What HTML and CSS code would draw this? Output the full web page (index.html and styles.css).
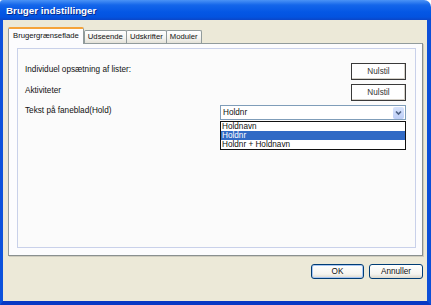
FILE: index.html
```html
<!DOCTYPE html>
<html lang="da">
<head>
  <meta charset="UTF-8">
  <title>Bruger indstillinger</title>
  <link rel="stylesheet" href="styles.css">
</head>
<body>
  <div class="window">
    <div class="titlebar">Bruger indstillinger</div>
    <div class="client">
      <div class="tabs">
        <div class="tab active">Brugergrænseflade</div>
        <div class="tab">Udseende</div>
        <div class="tab">Udskrifter</div>
        <div class="tab">Moduler</div>
      </div>
      <div class="tabpanel">
        <div class="page">
          <div class="row">
            <span class="label">Individuel opsætning af lister:</span>
            <button class="reset">Nulstil</button>
          </div>
          <div class="row">
            <span class="label">Aktiviteter</span>
            <button class="reset">Nulstil</button>
          </div>
          <div class="row">
            <span class="label">Tekst på faneblad(Hold)</span>
            <div class="combo">
              <div class="combo-value">Holdnr</div>
              <div class="combo-arrow">
                <svg width="11" height="12" viewBox="0 0 11 12">
                  <path d="M3 4.5 L5.5 7 L8 4.5" fill="none" stroke="#4d6185" stroke-width="1.7"/>
                </svg>
              </div>
              <ul class="combo-list">
                <li>Holdnavn</li>
                <li class="selected">Holdnr</li>
                <li>Holdnr + Holdnavn</li>
              </ul>
            </div>
          </div>
        </div>
      </div>
      <div class="actions">
        <button class="btn default">OK</button>
        <button class="btn">Annuller</button>
      </div>
    </div>
  </div>
</body>
</html>
```

FILE: styles.css
```css
body {
  margin: 0;
  background: #ffffff;
  font-family: "Liberation Sans", Arial, sans-serif;
  font-size: 8.2px;
  color: #111;
}
.window {
  width: 431px;
  height: 305px;
  display: flex;
  flex-direction: column;
}
.titlebar {
  height: 20px;
  box-sizing: border-box;
  padding-left: 6px;
  line-height: 21px;
  color: white;
  font-weight: bold;
  font-size: 9.8px;
  text-shadow: 1px 1px 0 #0a2d8c;
  background: linear-gradient(#4b93f6, #1466ea 25%, #0457e5 60%, #0353e0 85%, #0a46c8);
  border-top-left-radius: 3px;
  border-top-right-radius: 7px;
}
.client {
  flex: 1;
  display: flex;
  flex-direction: column;
  background: #ece9d8;
  border-left: 3px solid #0c52dc;
  border-right: 4px solid #0c4fd8;
  border-bottom: 4px solid #0838c4;
  padding: 7px 4px 0 5px;
}
.tabs {
  display: flex;
  align-items: flex-end;
  height: 17px;
  margin-bottom: -1px;
  position: relative;
  z-index: 1;
  font-size: 7.7px;
}
.tab {
  height: 13px;
  box-sizing: border-box;
  margin-bottom: 1px;
  margin-left: -1px;
  padding: 0 3px;
  line-height: 12px;
  border: 1px solid #919b9c;
  border-bottom: none;
  border-radius: 2px 2px 0 0;
  background: linear-gradient(#ffffff, #f3f3ef 60%, #e3e1d8);
}
.tab.active {
  height: 17px;
  margin-bottom: 0;
  margin-left: 0;
  margin-right: 1px;
  padding: 0 4px;
  line-height: 14px;
  border-top: 2px solid #f5a33a;
  background: #fcfcfe;
}
.tabpanel {
  height: 213px;
  box-sizing: border-box;
  display: flex;
  padding: 4px 6px 7px 8px;
  border: 1px solid #919b9c;
  border-right-color: #8a9090;
  border-bottom-color: #8a9090;
  background: #fcfcfe;
  box-shadow: 1px 1px 0 #d0cdbf;
}
.page {
  flex: 1;
  padding: 14px 9px 0 7px;
  border: 1px solid #c9d1ea;
  background: #fbfbfb;
}
.row {
  display: flex;
  align-items: center;
  justify-content: space-between;
  height: 17px;
  margin-bottom: 4px;
}
.row:last-child {
  height: 15px;
}
.label {
  margin-bottom: 4px;
}
.reset {
  width: 55px;
  height: 17px;
  padding: 0;
  font: inherit;
  color: #333;
  background: #ffffff;
  border: 1px solid #3a3a3a;
  box-shadow: inset -1px -1px 0 #d4d0c8;
}
.combo {
  position: relative;
  width: 186px;
  height: 15px;
  box-sizing: border-box;
  display: flex;
  align-items: center;
  justify-content: space-between;
  border: 1px solid #7f9db9;
  background: white;
}
.combo-value {
  padding-left: 2px;
}
.combo-arrow {
  width: 11px;
  height: 12px;
  margin-right: 1px;
  border-radius: 2px;
  background: linear-gradient(#d8e4fc, #bccdf6);
  display: flex;
}
.combo-list {
  position: absolute;
  left: -1px;
  top: 15px;
  width: 186px;
  box-sizing: border-box;
  margin: 0;
  padding: 0;
  list-style: none;
  border: 1px solid #111;
  background: white;
}
.combo-list li {
  height: 9px;
  line-height: 9px;
  padding-left: 1px;
}
.combo-list li.selected {
  background: #316ac5;
  color: white;
}
.actions {
  display: flex;
  justify-content: flex-end;
  gap: 5px;
  margin-top: 8px;
}
.btn {
  width: 54px;
  height: 15px;
  padding: 0;
  font: inherit;
  color: #111;
  border: 1px solid #003c74;
  border-radius: 3px;
  background: linear-gradient(#ffffff, #f5f4ef 70%, #dcd8cc);
}
.btn.default {
  width: 53px;
  box-shadow: inset 0 0 0 1px #a8c6f2;
}
```
